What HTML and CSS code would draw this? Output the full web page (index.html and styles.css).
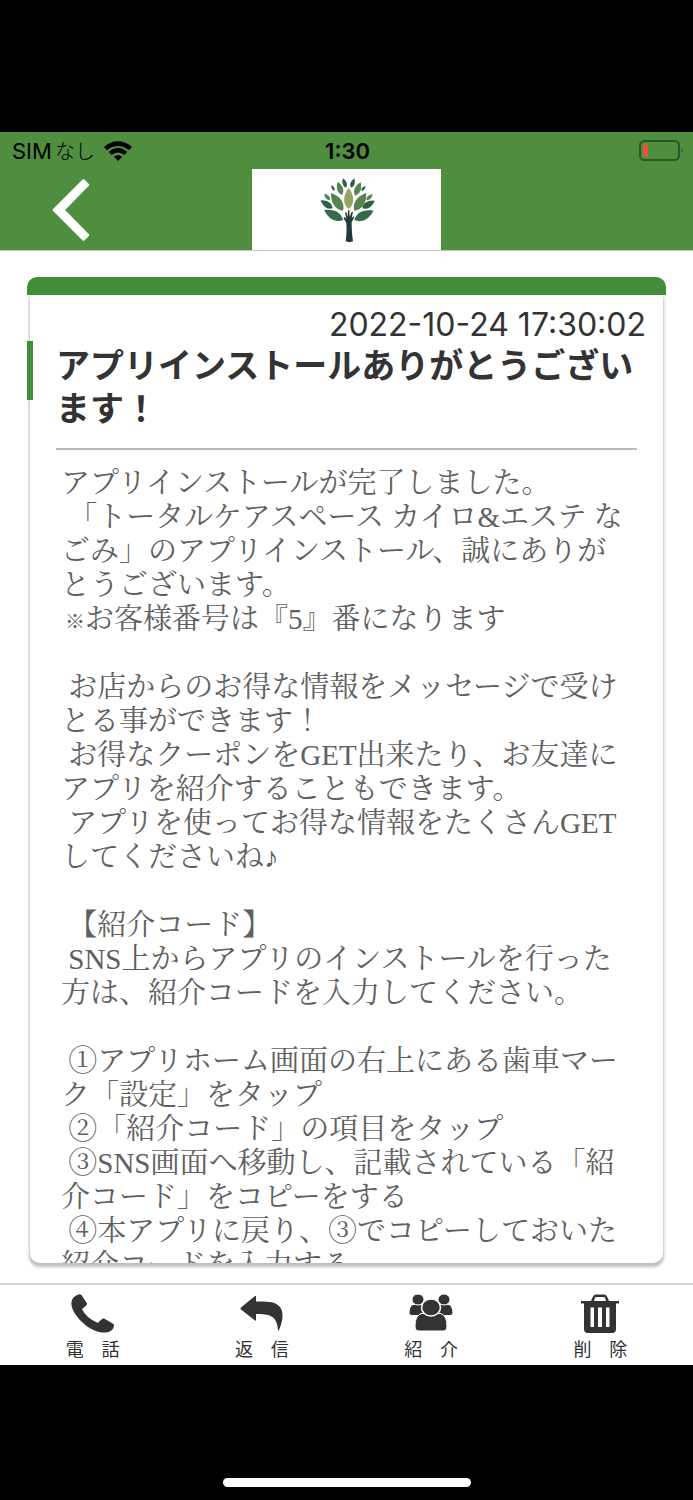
FILE: index.html
```html
<!DOCTYPE html>
<html lang="ja">
<head>
<meta charset="utf-8">
<meta name="viewport" content="width=device-width, initial-scale=1">
<title>メッセージ</title>
<link rel="stylesheet" href="styles.css">
</head>
<body>
<div class="app">
  <header class="header">
    <div class="status">
      <div class="carrier"><span>SIM<span class="carrier-ja">なし</span></span>
        <svg class="wifi" viewBox="0 0 28 20" aria-hidden="true"><path d="M0 6C8-1.800 20-1.800 28 6L25 9.300C19 3.400 9 3.400 3 9.300ZM4.800 10.900C10 5.800 18 5.800 23.200 10.900L20.200 14C16.500 10.600 11.500 10.600 7.800 14ZM9.800 15.700C12.200 13.600 15.800 13.600 18.200 15.700L14 20Z"/></svg>
      </div>
      <time class="clock">1:30</time>
      <svg class="battery" viewBox="0 0 44 22" aria-hidden="true"><rect x="1" y="1" width="39" height="19" rx="4.500" fill="none" stroke="#2d5526" stroke-width="2"/><path d="M42.500 7.500q2 3 0 6z" fill="#2d5526"/><rect x="4" y="4" width="5" height="13" rx="2" fill="#eb5340"/></svg>
    </div>
    <nav class="nav">
      <button class="back" type="button" aria-label="戻る"><svg viewBox="0 0 38 62" aria-hidden="true"><path d="M31.500 1.500L36 6L11.500 31L36 56L31.500 60.500L2 31Z" fill="#fff" stroke="#fff" stroke-width="2.500" stroke-linejoin="round"/></svg></button>
      <div class="logo">
        <svg viewBox="20 30 180 210" role="img" aria-label="なごみ">
          <defs><path id="leaf" d="M0 0C-18-15-18-40 0-64C18-40 18-15 0 0Z"/></defs>
          <g fill="#93a566"><use href="#leaf" transform="translate(115 132)"/></g>
          <g fill="#568450">
            <use href="#leaf" transform="translate(98 137) rotate(-34)"/>
            <use href="#leaf" transform="translate(132 137) rotate(34)"/>
            <use href="#leaf" transform="translate(95 90) rotate(-18) scale(.65)"/>
            <use href="#leaf" transform="translate(134 92) rotate(23) scale(.68)"/>
            <use href="#leaf" transform="translate(59 105) rotate(-42) scale(.4)"/>
            <use href="#leaf" transform="translate(168 105) rotate(47) scale(.4)"/>
          </g>
          <g fill="#2f614a">
            <use href="#leaf" transform="translate(107 68) rotate(-18) scale(.46)"/>
            <use href="#leaf" transform="translate(122 68) rotate(20) scale(.46)"/>
            <use href="#leaf" transform="translate(73 77) rotate(-32) scale(.3)"/>
            <use href="#leaf" transform="translate(153 77) rotate(42) scale(.3)"/>
            <use href="#leaf" transform="translate(67 130) rotate(-56) scale(.68)"/>
            <use href="#leaf" transform="translate(156 130) rotate(58) scale(.68)"/>
          </g>
          <g fill="#356a4b">
            <use href="#leaf" transform="translate(98 165) rotate(-62)"/>
            <use href="#leaf" transform="translate(132 165) rotate(64)"/>
          </g>
          <path fill="#213a38" d="M106 229C109 211 109 190 108 174L99 158L103 156L108 162L104 143L108 142L112 156L113 136H117L118 156L124 140L128 141L124 160L131 153L132 157L124 172C124 190 125 212 128 229Q117 234 106 229Z"/>
        </svg>
      </div>
    </nav>
  </header>

  <main class="main">
    <article class="card">
      <div class="cap"></div>
      <div class="sheet">
        <time class="date">2022-10-24 17:30:02</time>
        <h1 class="title">アプリインストールありがとうございます！</h1>
        <div class="message">アプリインストールが完了しました。
 「トータルケアスペース カイロ&amp;エステ なごみ」のアプリインストール、誠にありがとうございます。
<span class="mark">※</span>お客様番号は『5』番になります

 お店からのお得な情報をメッセージで受けとる事ができます！
 お得なクーポンをGET出来たり、お友達にアプリを紹介することもできます。
 アプリを使ってお得な情報をたくさんGETしてくださいね<span class="note">♪</span>

 【紹介コード】
 SNS上からアプリのインストールを行った方は、紹介コードを入力してください。

 ①アプリホーム画面の右上にある歯車マーク「設定」をタップ
 ②「紹介コード」の項目をタップ
 ③SNS画面へ移動し、記載されている「紹介コード」をコピーをする
 ④本アプリに戻り、③でコピーしておいた紹介コードを入力する</div>
      </div>
    </article>
  </main>

  <footer class="tabs">
    <button class="tab" type="button">
      <svg viewBox="0 0 44 40" aria-hidden="true"><path d="M3 3Q8-1 10.500 1L16 9.500Q16.500 11 11 15Q15 24 27 29Q31 24 33 24.500L42.500 30Q44 32 41 36C36 41 22 39 11 28C0 17-2 8 3 3Z"/></svg>
      <span>電　話</span>
    </button>
    <button class="tab" type="button">
      <svg viewBox="0 0 44 40" aria-hidden="true"><path d="M1 13.500Q0 14.500 1 15.500L15 26.500Q16 27 16 26V20C29 20 37 21 38 36Q38.500 37 39 36C43 27 45 15 37 10.500C33 7.500 27 7.500 16 7.500V2.500Q16 1.500 15 2Z"/></svg>
      <span>返　信</span>
    </button>
    <button class="tab" type="button">
      <svg viewBox="0 0 44 40" aria-hidden="true"><path d="M4 11H14V21H2.500Q.5 21 .5 18Q1 12 4 11ZM40 11H30V21H41.500Q43.500 21 43.500 18Q43 12 40 11Z"/><ellipse cx="9" cy="5.500" rx="6" ry="5.500" stroke="#fff"/><ellipse cx="35" cy="5.500" rx="6" ry="5.500" stroke="#fff"/><path stroke="#fff" d="M12 19.500H32Q38 22 38 32Q38 37 34 37H10Q6 37 6 32Q6 22 12 19.500Z"/><ellipse cx="22" cy="13.500" rx="9.500" ry="8.500" stroke="#fff" stroke-width="1.500"/></svg>
      <span>紹　介</span>
    </button>
    <button class="tab" type="button">
      <svg viewBox="0 0 44 40" aria-hidden="true"><path fill-rule="evenodd" d="M3 7H13L15 2.500Q16 .5 18 .5H26Q28 .5 29 2.500L31 7H41V9.500H38V35Q38 39 34 39H10Q6 39 6 35V9.500H3ZM16 7H28L27 3.500Q26.500 3 25 3H19Q17.500 3 17 3.500ZM12.500 13.500V33H16V13.500ZM20 13.500V33H24V13.500ZM28 13.500V33H31.500V13.500Z"/></svg>
      <span>削　除</span>
    </button>
  </footer>
</div>
<div class="home"></div>
</body>
</html>
```
FILE: styles.css
```css
* {
  box-sizing: border-box;
}

body {
  margin: 0;
  height: 100vh;
  padding-top: 132px;
  display: flex;
  flex-direction: column;
  background: #000;
  color: #333;
  font-family: Inter, "Noto Sans CJK JP", sans-serif;
}

button {
  border: 0;
  padding: 0;
  background: none;
  color: inherit;
  font: inherit;
}

.app {
  flex: 1;
  min-height: 0;
  display: flex;
  flex-direction: column;
  background: #fff;
}

.header {
  background: #4f8d3f;
  border-bottom: 1px solid #c4c4c4;
}

.status {
  display: grid;
  grid-template-columns: 1fr auto 1fr;
  align-items: center;
  height: 37px;
  padding: 0 10px 0 12px;
  color: #000;
  font-size: 22px;
}

.carrier {
  display: flex;
  align-items: center;
  gap: 9px;
}

.carrier-ja {
  margin-left: 3px;
  font-size: 20px;
  font-weight: 300;
}

.wifi {
  width: 28px;
  height: 20px;
}

.clock {
  font-weight: 600;
}

.battery {
  width: 44px;
  height: 22px;
  justify-self: end;
}

.nav {
  display: grid;
  grid-template-columns: 1fr 189px 1fr;
  height: 81px;
}

.back {
  justify-self: start;
  margin-left: 52px;
}

.back svg {
  display: block;
  width: 38px;
  height: 62px;
}

.logo {
  display: flex;
  justify-content: center;
  padding-top: 6px;
  background: #fff;
}

.logo svg {
  width: 60px;
  height: 70px;
}

.main {
  flex: 1;
  min-height: 0;
  padding: 26px 27px 20px;
}

.card {
  height: 100%;
  display: flex;
  flex-direction: column;
}

.cap {
  height: 18px;
  border-radius: 10px 10px 0 0;
  background: #438c39;
}

.sheet {
  flex: 1;
  min-height: 0;
  display: flex;
  flex-direction: column;
  margin: 0 3px;
  border-radius: 0 0 10px 10px;
  box-shadow: 0 3px 3px 1px rgba(0, 0, 0, 0.25);
}

.date {
  padding: 11px 17px 0 0;
  font-size: 32px;
  line-height: 38px;
  text-align: right;
}

.title {
  position: relative;
  margin: 0 26px;
  padding-bottom: 18px;
  border-bottom: 2px solid #b8b8b8;
  font-size: 34px;
  font-weight: 700;
  line-height: 43px;
  color: #333;
}

.title::before {
  content: "";
  position: absolute;
  top: -3px;
  left: -29px;
  width: 6px;
  height: 59px;
  background: #438c39;
}

.message {
  flex: 1;
  min-height: 0;
  overflow: hidden;
  margin: 16px 31px 0 31px;
  color: #606060;
  font-family: "Liberation Serif", "Noto Serif CJK JP", "Noto Sans CJK JP", serif;
  font-size: 29px;
  font-weight: 400;
  line-height: 34px;
  white-space: pre-wrap;
}

.mark {
  margin-left: 4px;
  font-size: 20px;
  font-weight: 700;
  line-height: 20px;
}

.note {
  font-weight: 700;
  line-height: 20px;
}

.tabs {
  display: grid;
  grid-template-columns: repeat(4, 1fr);
  height: 82px;
  padding: 0 8px;
  border-top: 2px solid #d4d4d4;
}

.tab {
  display: flex;
  flex-direction: column;
  align-items: center;
  padding-top: 9px;
  font-size: 18px;
  line-height: 24px;
}

.tab svg {
  width: 44px;
  height: 40px;
  margin-bottom: 4px;
  fill: #333;
}

.home {
  align-self: center;
  width: 248px;
  height: 9px;
  margin: 113px 0 13px;
  border-radius: 5px;
  background: #fff;
}
```
